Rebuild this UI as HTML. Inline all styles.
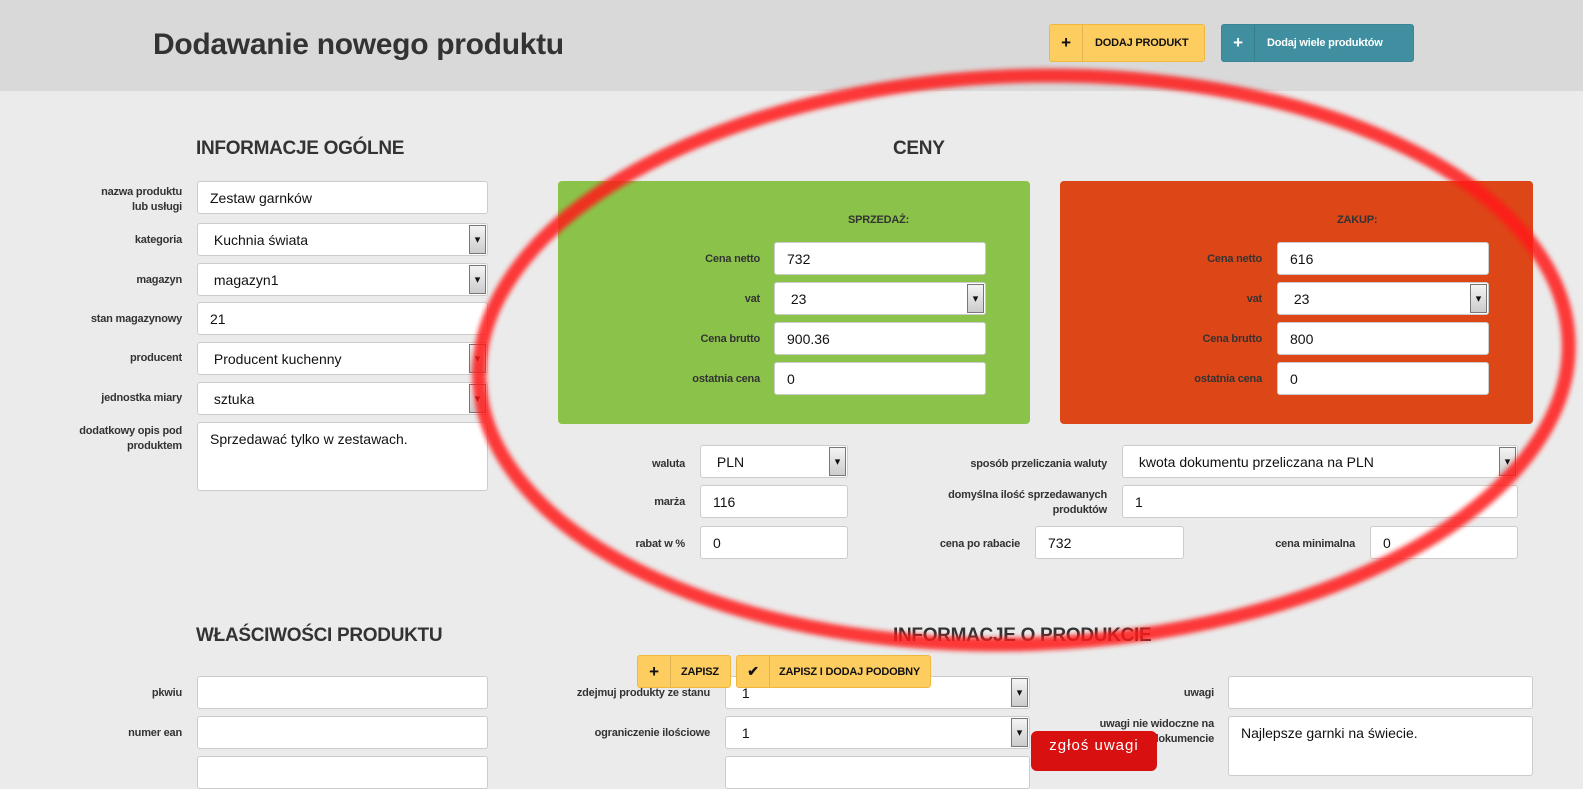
<!DOCTYPE html>
<html><head><meta charset="utf-8"><style>
*{box-sizing:border-box;margin:0;padding:0}
body{width:1583px;height:765px;overflow:hidden;background:#ebebeb;font-family:"Liberation Sans Narrow","Liberation Sans",sans-serif;color:#333;position:relative}
.hdr{position:absolute;left:0;top:0;width:1583px;height:91px;background:#d9d9d9}
.a{position:absolute}
h1{position:absolute;left:153px;top:28px;font-size:30px;font-weight:bold;color:#333;letter-spacing:-0.3px}
h2{position:absolute;font-size:19px;font-weight:bold;color:#333;letter-spacing:-0.3px}
.lbl{position:absolute;font-size:11px;font-weight:bold;text-align:right;color:#333;line-height:15px;letter-spacing:-0.2px}
.inp{position:absolute;background:#fff;border:1px solid #ccc;border-radius:3px;font-size:14px;padding-left:12px;display:flex;align-items:center;color:#111;white-space:nowrap}
.sel::after{content:"▾";position:absolute;right:1px;top:1px;bottom:1px;width:15px;background:linear-gradient(#f4f4f4,#ccc);border:1px solid #777;font-size:11px;display:flex;align-items:center;justify-content:center}
.btn{position:absolute;border-radius:3px;font-size:11px;font-weight:bold;display:flex;align-items:center;white-space:nowrap;letter-spacing:-0.2px}
.btn .ic{width:33px;flex:none;height:100%;display:flex;align-items:center;justify-content:center;font-size:17px;border-right:1px solid rgba(0,0,0,.12)}
.y{background:#fecd60;border:1px solid #f0b83a;color:#111}
</style></head><body>
<div class="hdr"></div>
<h1>Dodawanie nowego produktu</h1>
<div class="btn y" style="left:1049px;top:24px;width:156px;height:38px"><div class="ic">+</div><div style="padding-left:12px">DODAJ PRODUKT</div></div>
<div class="btn" style="left:1221px;top:24px;width:193px;height:38px;background:#3f8fa1;color:#fff;border:1px solid #3a8596"><div class="ic">+</div><div style="padding-left:12px">Dodaj wiele produktów</div></div>

<h2 style="left:196px;top:138px">INFORMACJE OGÓLNE</h2>
<h2 style="left:893px;top:138px">CENY</h2>

<div class="lbl" style="left:60px;top:185px;width:122px">nazwa produktu<br>lub usługi</div>
<div class="inp" style="left:197px;top:181px;width:291px;height:33px">Zestaw garnków</div>
<div class="lbl" style="left:60px;top:233px;width:122px">kategoria</div>
<div class="inp sel" style="left:197px;top:223px;width:291px;height:33px">&nbsp;Kuchnia świata</div>
<div class="lbl" style="left:60px;top:273px;width:122px">magazyn</div>
<div class="inp sel" style="left:197px;top:263px;width:291px;height:33px">&nbsp;magazyn1</div>
<div class="lbl" style="left:40px;top:312px;width:142px">stan magazynowy</div>
<div class="inp" style="left:197px;top:302px;width:291px;height:33px">21</div>
<div class="lbl" style="left:60px;top:351px;width:122px">producent</div>
<div class="inp sel" style="left:197px;top:342px;width:291px;height:33px">&nbsp;Producent kuchenny</div>
<div class="lbl" style="left:60px;top:391px;width:122px">jednostka miary</div>
<div class="inp sel" style="left:197px;top:382px;width:291px;height:33px">&nbsp;sztuka</div>
<div class="lbl" style="left:60px;top:424px;width:122px">dodatkowy opis pod produktem</div>
<div class="inp" style="left:197px;top:422px;width:291px;height:69px;align-items:flex-start;padding-top:8px">Sprzedawać tylko w zestawach.</div>

<div class="a" style="left:558px;top:181px;width:472px;height:243px;background:#8bc34a;border-radius:4px"></div>
<div class="a" style="left:1060px;top:181px;width:473px;height:243px;background:#dd4718;border-radius:4px"></div>
<div class="lbl" style="left:848px;top:213px">SPRZEDAŻ:</div>
<div class="lbl" style="left:1337px;top:213px">ZAKUP:</div>
<div class="lbl" style="left:620px;top:252px;width:140px">Cena netto</div>
<div class="inp" style="left:774px;top:242px;width:212px;height:33px">732</div>
<div class="lbl" style="left:620px;top:292px;width:140px">vat</div>
<div class="inp sel" style="left:774px;top:282px;width:212px;height:33px">&nbsp;23</div>
<div class="lbl" style="left:620px;top:332px;width:140px">Cena brutto</div>
<div class="inp" style="left:774px;top:322px;width:212px;height:33px">900.36</div>
<div class="lbl" style="left:620px;top:372px;width:140px">ostatnia cena</div>
<div class="inp" style="left:774px;top:362px;width:212px;height:33px">0</div>
<div class="lbl" style="left:1122px;top:252px;width:140px">Cena netto</div>
<div class="inp" style="left:1277px;top:242px;width:212px;height:33px">616</div>
<div class="lbl" style="left:1122px;top:292px;width:140px">vat</div>
<div class="inp sel" style="left:1277px;top:282px;width:212px;height:33px">&nbsp;23</div>
<div class="lbl" style="left:1122px;top:332px;width:140px">Cena brutto</div>
<div class="inp" style="left:1277px;top:322px;width:212px;height:33px">800</div>
<div class="lbl" style="left:1122px;top:372px;width:140px">ostatnia cena</div>
<div class="inp" style="left:1277px;top:362px;width:212px;height:33px">0</div>

<div class="lbl" style="left:585px;top:457px;width:100px">waluta</div>
<div class="inp sel" style="left:700px;top:445px;width:148px;height:33px">&nbsp;PLN</div>
<div class="lbl" style="left:585px;top:495px;width:100px">marża</div>
<div class="inp" style="left:700px;top:485px;width:148px;height:33px">116</div>
<div class="lbl" style="left:585px;top:537px;width:100px">rabat w %</div>
<div class="inp" style="left:700px;top:526px;width:148px;height:33px">0</div>
<div class="lbl" style="left:900px;top:457px;width:207px">sposób przeliczania waluty</div>
<div class="inp sel" style="left:1122px;top:445px;width:396px;height:33px">&nbsp;kwota dokumentu przeliczana na PLN</div>
<div class="lbl" style="left:900px;top:488px;width:207px">domyślna ilość sprzedawanych produktów</div>
<div class="inp" style="left:1122px;top:485px;width:396px;height:33px">1</div>
<div class="lbl" style="left:900px;top:537px;width:120px">cena po rabacie</div>
<div class="inp" style="left:1035px;top:526px;width:149px;height:33px">732</div>
<div class="lbl" style="left:1220px;top:537px;width:135px">cena minimalna</div>
<div class="inp" style="left:1370px;top:526px;width:148px;height:33px">0</div>

<h2 style="left:196px;top:625px">WŁAŚCIWOŚCI PRODUKTU</h2>
<h2 style="left:893px;top:625px">INFORMACJE O PRODUKCIE</h2>

<div class="lbl" style="left:60px;top:686px;width:122px">pkwiu</div>
<div class="inp" style="left:197px;top:676px;width:291px;height:33px"></div>
<div class="lbl" style="left:60px;top:726px;width:122px">numer ean</div>
<div class="inp" style="left:197px;top:716px;width:291px;height:33px"></div>
<div class="inp" style="left:197px;top:756px;width:291px;height:33px"></div>
<div class="lbl" style="left:540px;top:686px;width:170px">zdejmuj produkty ze stanu</div>
<div class="inp sel" style="left:725px;top:676px;width:305px;height:33px">&nbsp;1</div>
<div class="lbl" style="left:540px;top:726px;width:170px">ograniczenie ilościowe</div>
<div class="inp sel" style="left:725px;top:716px;width:305px;height:33px">&nbsp;1</div>
<div class="inp" style="left:725px;top:756px;width:305px;height:33px"></div>
<div class="lbl" style="left:1080px;top:686px;width:134px">uwagi</div>
<div class="lbl" style="left:1060px;top:717px;width:154px">uwagi nie widoczne na dokumencie</div>
<div class="inp" style="left:1228px;top:676px;width:305px;height:33px"></div>
<div class="inp" style="left:1228px;top:716px;width:305px;height:60px;align-items:flex-start;padding-top:8px">Najlepsze garnki na świecie.</div>

<svg class="a" style="left:0;top:0" width="1583" height="765"><defs><filter id="b"><feGaussianBlur stdDeviation="2.5"/></filter></defs>
<ellipse cx="1024" cy="360" rx="545" ry="284" fill="none" stroke="#ff1a1a" stroke-opacity=".85" stroke-width="14" filter="url(#b)" transform="rotate(-2 1024 360)"/></svg>

<div class="btn y" style="left:637px;top:655px;width:94px;height:33px"><div class="ic">+</div><div style="padding-left:10px">ZAPISZ</div></div>
<div class="btn y" style="left:736px;top:655px;width:195px;height:33px"><div class="ic" style="font-size:14px">✔</div><div style="padding-left:9px">ZAPISZ I DODAJ PODOBNY</div></div>
<div class="a" style="left:1031px;top:731px;width:126px;height:40px;background:#d91010;border-radius:6px;color:#fff;font-size:15px;letter-spacing:1px;text-align:center;padding-top:6px;font-family:'Liberation Sans',sans-serif">zgłoś uwagi</div>
</body></html>
